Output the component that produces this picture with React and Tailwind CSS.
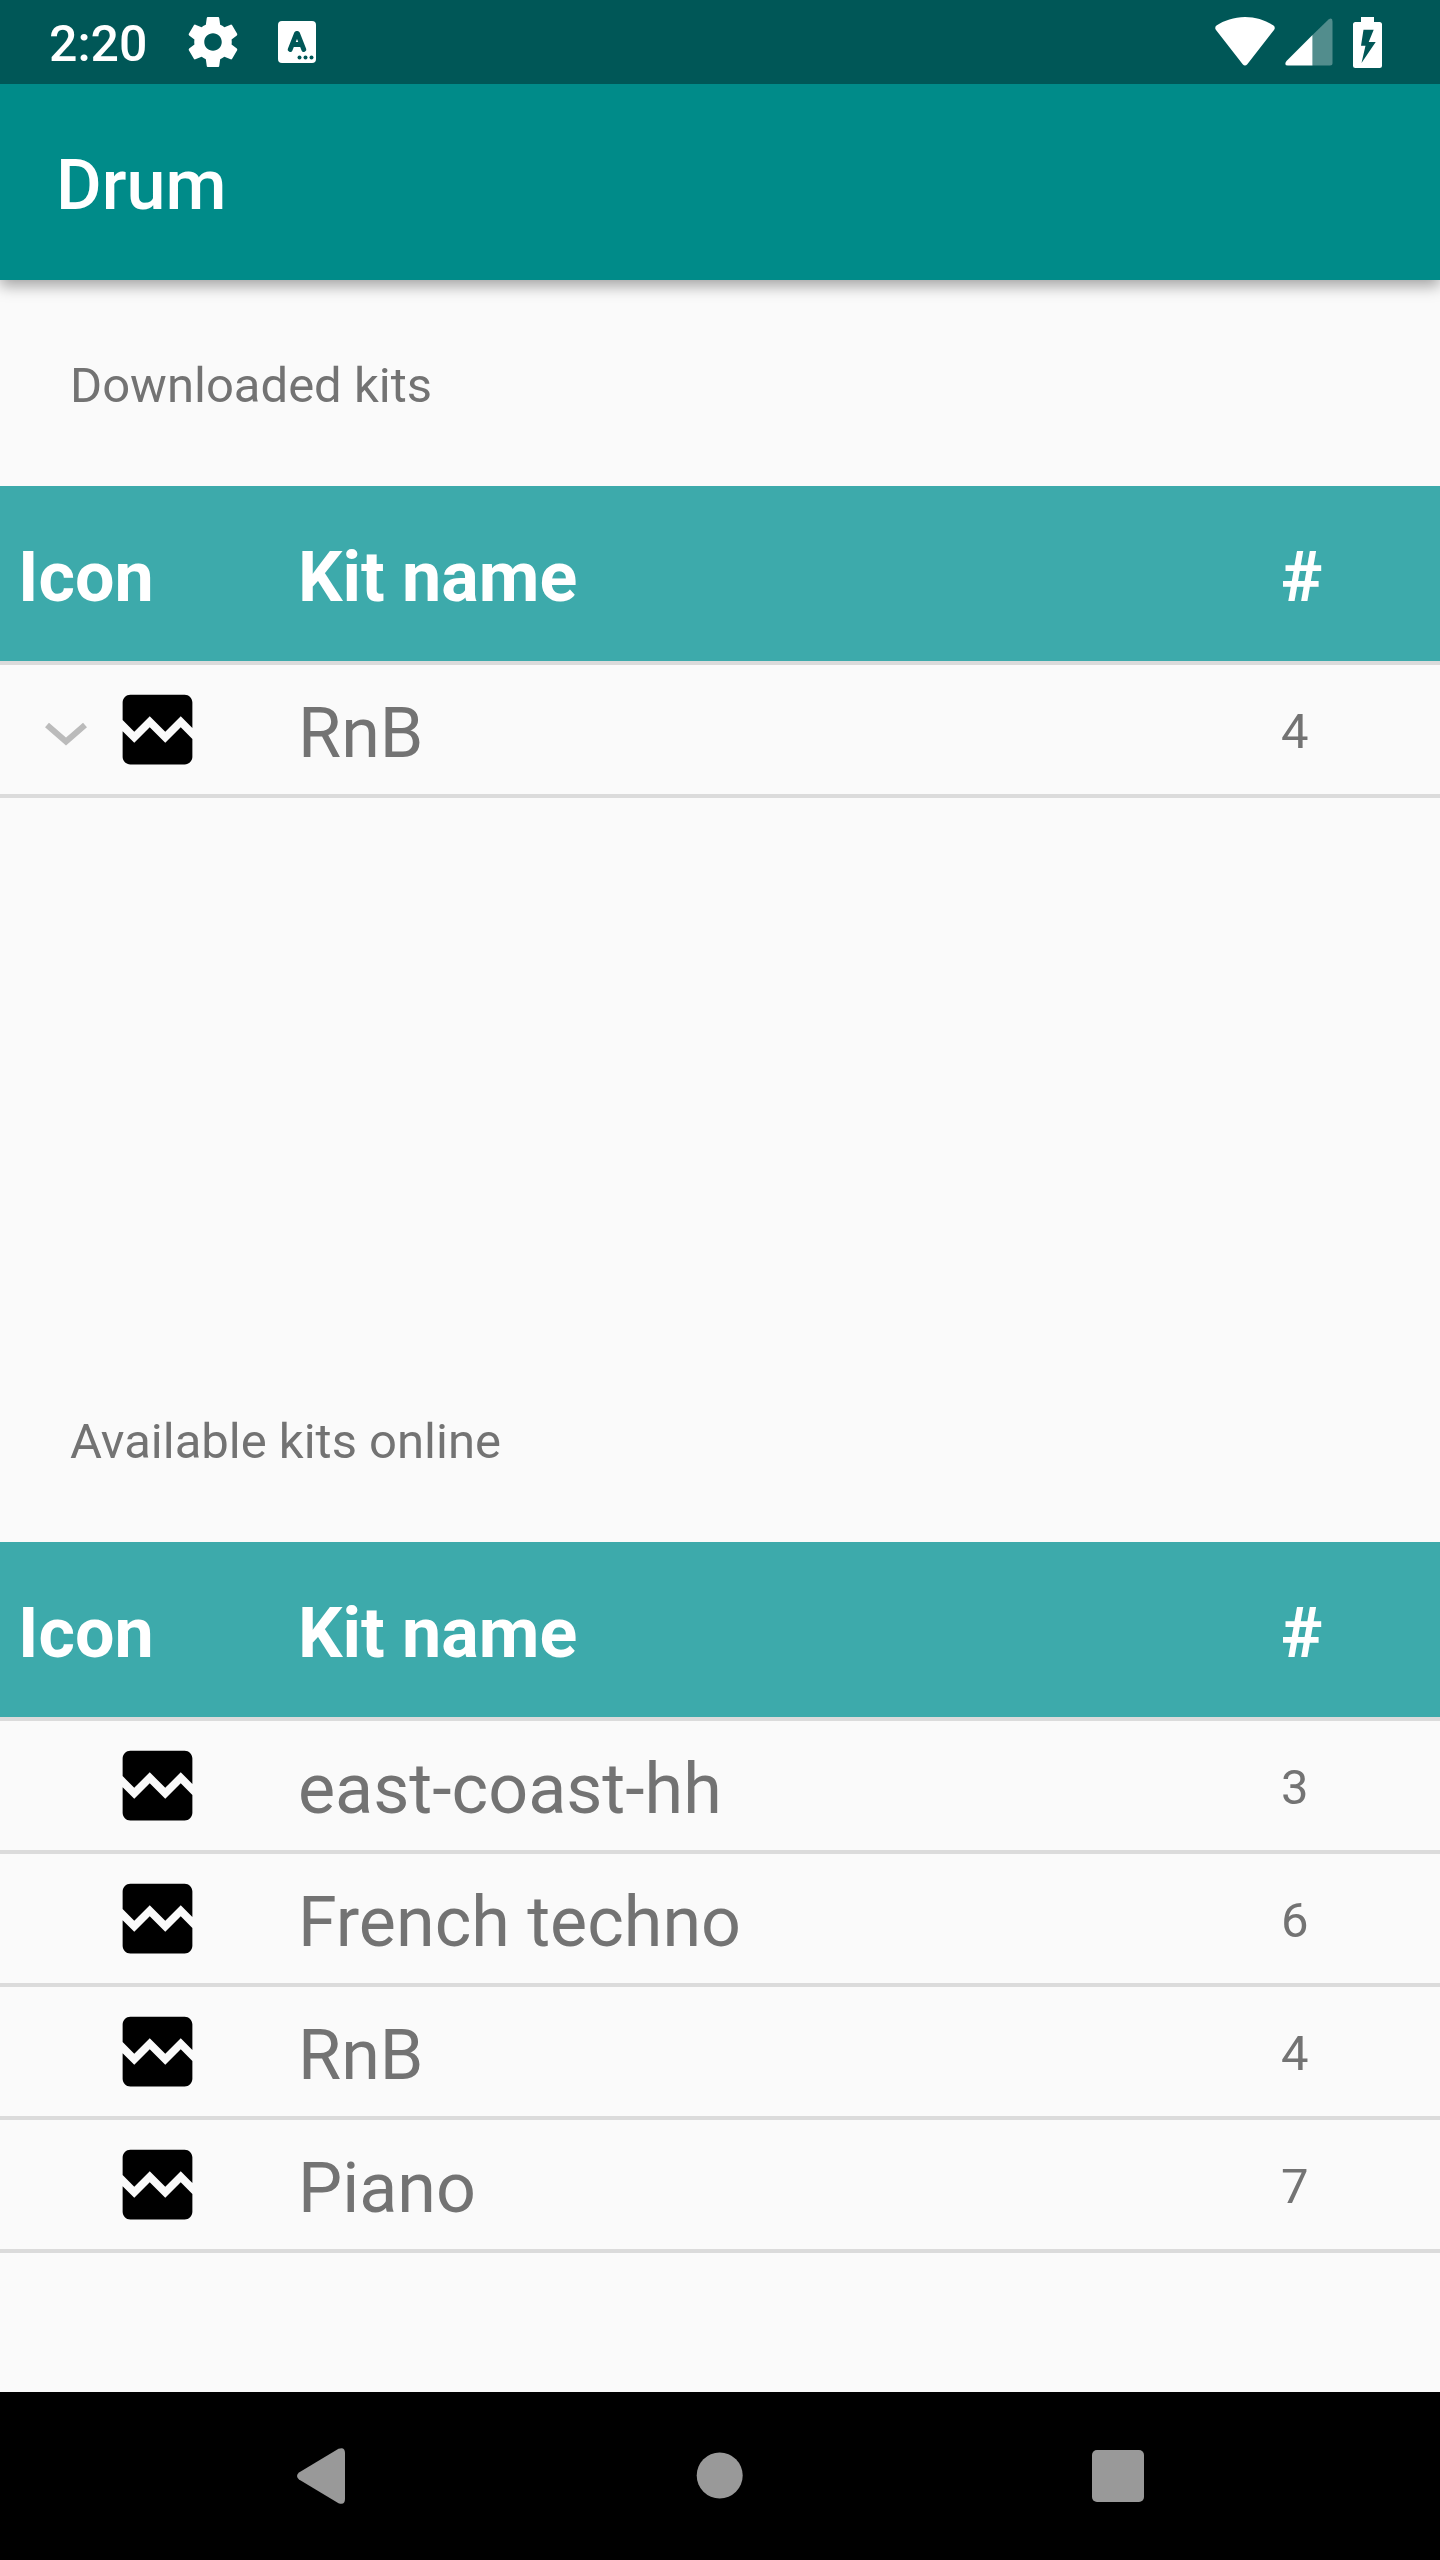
const font = { fontFamily: 'Roboto, "Noto Sans", sans-serif' };

function BrokenImage() {
  return (
    <svg viewBox="0 0 24 24" className="size-[93px] fill-black" role="img" aria-label="Kit icon">
      <path d="M21 5v6.59l-3-3.01-4 4.01-4-4-4 4-3-3.01V5c0-1.1.9-2 2-2h14c1.1 0 2 .9 2 2zm-3 6.42l3 3.01V19c0 1.1-.9 2-2 2H5c-1.1 0-2-.9-2-2v-6.58l3 2.99 4-4 4 4 4-3.99z" />
    </svg>
  );
}

function StatusBar() {
  return (
    <div className="relative z-10 flex h-[84px] shrink-0 items-center justify-between bg-[#005757] pr-[58px] pl-[49px] text-white">
      <div className="flex items-center">
        <span className="pt-1 text-[50px] leading-[60px] font-medium">2:20</span>
        <svg viewBox="0 0 24 24" className="ml-9 size-[60px] fill-white" aria-hidden="true">
          <path d="M19.43 12.98c.04-.32.07-.64.07-.98s-.03-.66-.07-.98l2.11-1.65c.19-.15.24-.42.12-.64l-2-3.46c-.12-.22-.39-.3-.61-.22l-2.49 1c-.52-.4-1.08-.73-1.69-.98l-.38-2.65C14.46 2.18 14.25 2 14 2h-4c-.25 0-.46.18-.49.42l-.38 2.65c-.61.25-1.17.59-1.69.98l-2.49-1c-.23-.09-.49 0-.61.22l-2 3.46c-.13.22-.07.49.12.64l2.11 1.65c-.04.32-.07.65-.07.98s.03.66.07.98l-2.11 1.65c-.19.15-.24.42-.12.64l2 3.46c.12.22.39.3.61.22l2.49-1c.52.4 1.08.73 1.69.98l.38 2.65c.03.24.24.42.49.42h4c.25 0 .46-.18.49-.42l.38-2.65c.61-.25 1.17-.59 1.69-.98l2.49 1c.23.09.49 0 .61-.22l2-3.46c.12-.22.07-.49-.12-.64l-2.11-1.65zM12 15.5c-1.93 0-3.5-1.57-3.5-3.5s1.57-3.5 3.5-3.5 3.5 1.57 3.5 3.5-1.57 3.5-3.5 3.5z" />
        </svg>
        <svg viewBox="0 0 38 42" className="ml-[35px] h-[42px] w-[38px]" aria-hidden="true">
          <rect width="38" height="42" rx="4" fill="#fff" />
          <path d="M12.200 28.500L18.500 12.500H19.500L25.800 28.500M14.500 23.500H23.500" fill="none" stroke="#005757" strokeWidth="4.800" strokeLinecap="round" strokeLinejoin="round" />
          <g fill="#005757"><circle cx="21.500" cy="36.500" r="2" /><circle cx="27.500" cy="36.500" r="2" /><circle cx="33.500" cy="36.500" r="2" /></g>
        </svg>
      </div>
      <div className="flex items-center">
        <svg viewBox="0 0 60 50" className="h-[50px] w-[60px] fill-white" aria-hidden="true">
          <path d="M30 0C19 0 9 3.500 1.500 8.600C0 9.800-.2 11.500 1 13L27.700 47.200Q30 49.800 32.300 47.200L59 13C60.200 11.500 60 9.800 58.500 8.600C51 3.500 41 0 30 0Z" />
        </svg>
        <svg viewBox="0 0 48 48" className="ml-2.5 size-12 fill-white" aria-hidden="true">
          <path d="M27.500 17L43.500 1.500Q47.500-1 47.500 3.500V45Q47.500 47.500 45 47.500H27.500Z" opacity=".32" />
          <path d="M27.500 17V47.500H3Q-1.500 47.500 1.500 43Z" />
        </svg>
        <svg viewBox="0 0 29 51" className="ml-5 h-[51px] w-[29px]" aria-hidden="true">
          <path d="M8 0H21V5H26.500Q29 5 29 7.500V48.500Q29 51 26.500 51H2.500Q0 51 0 48.500V7.500Q0 5 2.500 5H8Z" fill="#fff" />
          <path d="M10.500 12.700H20.700L15.700 25H22.700L8.500 46L12.500 28.700H8Z" fill="#005757" />
        </svg>
      </div>
    </div>
  );
}

function KitTable({ title, kits }) {
  return (
    <section className="flex flex-col">
      <h2 className="px-[70px] pt-[76px] pb-[70px] text-[49px] leading-[60px] font-normal">{title}</h2>
      <table className="w-full table-fixed border-collapse text-left" aria-label={title}>
        <thead>
          <tr className="h-[177px] border-b-4 border-[#dbdbdb] bg-[#3daaab] text-[70px] leading-[82px] text-white">
            <th scope="col" className="w-[298px] pt-1.5 pl-[18px] font-bold">Icon</th>
            <th scope="col" className="pt-1.5 font-bold">Kit name</th>
            <th scope="col" className="w-[159px] pt-1.5 font-bold">#</th>
          </tr>
        </thead>
        <tbody>
          {kits.map((kit) => (
            <tr key={kit.name} className="h-[133px] border-b-4 border-[#dbdbdb]">
              <td className="p-0">
                <div className="flex items-center pl-6">
                  {kit.expandable ? (
                    <button type="button" aria-label={"Expand " + kit.name} className="size-[84px]">
                      <svg viewBox="0 0 84 84" className="size-[84px]" fill="none" stroke="#bbb" strokeWidth="6" aria-hidden="true">
                        <path d="M23 37L42 53.500L61 37" />
                      </svg>
                    </button>
                  ) : (
                    <span className="size-[84px]" />
                  )}
                  <span className="ml-[3px]"><BrokenImage /></span>
                </div>
              </td>
              <td className="pt-1.5 text-[70px] leading-[82px]">{kit.name}</td>
              <td className="pt-1 text-[49px] leading-[60px]">{kit.count}</td>
            </tr>
          ))}
        </tbody>
      </table>
    </section>
  );
}

const downloaded = [{ name: "RnB", count: 4, expandable: true }];
const online = [
  { name: "east-coast-hh", count: 3 },
  { name: "French techno", count: 6 },
  { name: "RnB", count: 4 },
  { name: "Piano", count: 7 },
];

export default function App() {
  return (
    <div className="flex min-h-screen flex-col bg-[#fafafa] text-[#737373]" style={font}>
      <StatusBar />
      <header className="flex h-[196px] shrink-0 items-center bg-[#008b89] px-14 pt-1.5 text-white shadow-[0_6px_14px_rgba(0,0,0,0.35)]">
        <h1 className="text-[70px] leading-[82px] font-medium">Drum</h1>
      </header>
      <main className="grid grow auto-rows-fr">
        <KitTable title="Downloaded kits" kits={downloaded} />
        <KitTable title="Available kits online" kits={online} />
      </main>
      <nav className="flex h-[168px] shrink-0 items-center justify-center gap-[259px] bg-black" aria-label="System">
        <button type="button" aria-label="Back" className="size-[140px]">
          <svg viewBox="0 0 140 140" className="size-[140px] fill-[#999]" aria-hidden="true">
            <path d="M48 66.500L87.500 42.800Q94 40.500 94 47V93Q94 99.500 87.500 97.200L48 73.500Q44 70 48 66.500Z" />
          </svg>
        </button>
        <button type="button" aria-label="Home" className="size-[140px]">
          <svg viewBox="0 0 140 140" className="size-[140px] fill-[#999]" aria-hidden="true"><circle cx="69.700" cy="69.500" r="23" /></svg>
        </button>
        <button type="button" aria-label="Overview" className="size-[140px]">
          <svg viewBox="0 0 140 140" className="size-[140px] fill-[#999]" aria-hidden="true"><rect x="43" y="44" width="52" height="52" rx="5" /></svg>
        </button>
      </nav>
    </div>
  );
}
